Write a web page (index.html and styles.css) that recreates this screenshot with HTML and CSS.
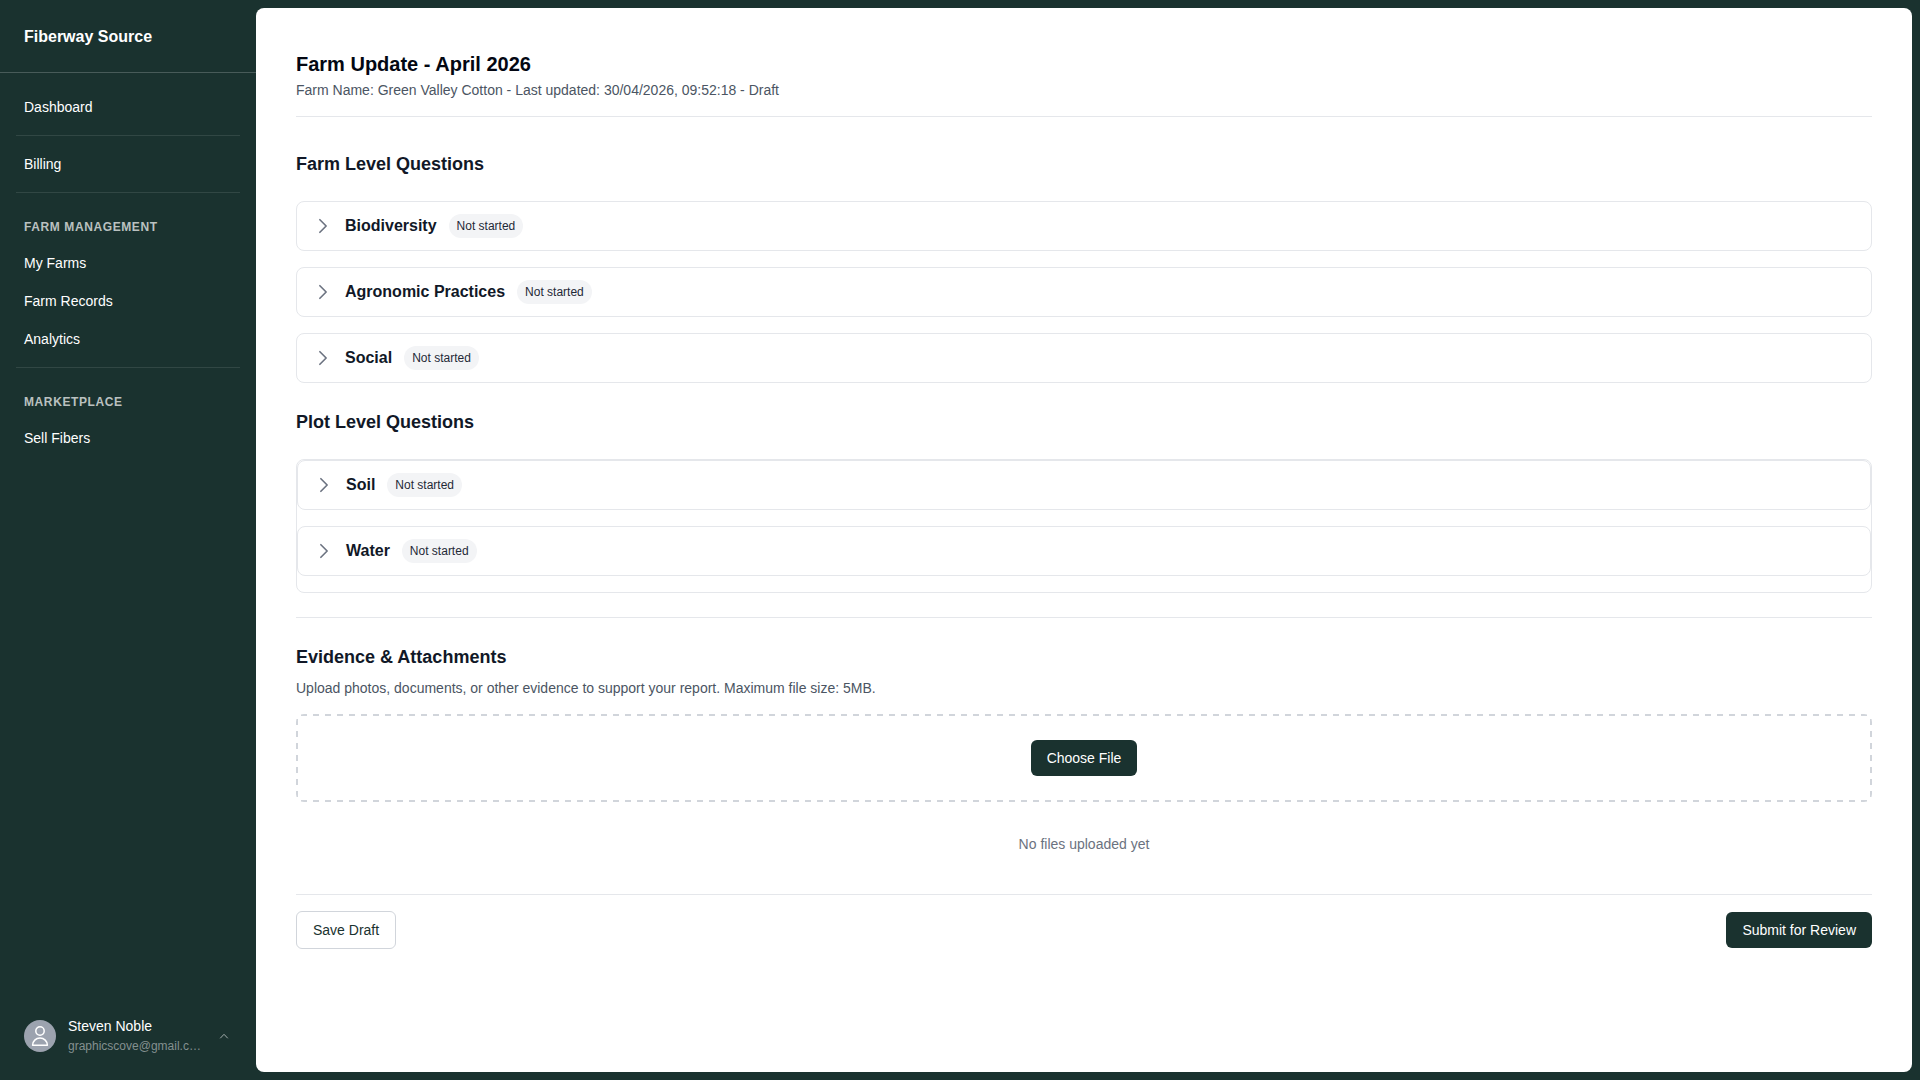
FILE: index.html
```html
<!DOCTYPE html>
<html lang="en">
<head>
  <meta charset="UTF-8" />
  <meta name="viewport" content="width=device-width, initial-scale=1.0"/>
  <title>Farm Update - Fiberway Source</title>
  <link rel="stylesheet" href="styles.css">
</head>
<body>
  <aside class="sidebar">
    <div class="brand">Fiberway Source</div>
    <nav class="nav">
      <a class="nav-link" href="#dashboard">Dashboard</a>
      <hr class="nav-divider">
      <a class="nav-link" href="#billing">Billing</a>
      <hr class="nav-divider">
      <div class="nav-group">
        <h2 class="nav-title">Farm Management</h2>
        <a class="nav-link" href="#farms">My Farms</a>
        <a class="nav-link" href="#records">Farm Records</a>
        <a class="nav-link" href="#analytics">Analytics</a>
      </div>
      <hr class="nav-divider">
      <div class="nav-group">
        <h2 class="nav-title">Marketplace</h2>
        <a class="nav-link" href="#sell">Sell Fibers</a>
      </div>
    </nav>
    <button type="button" class="user">
      <span class="avatar">
        <svg width="20" height="20" viewBox="0 0 20 20" fill="none" stroke="#fff" stroke-width="1.5" stroke-linejoin="round">
          <circle cx="10" cy="5" r="4.2"/>
          <path d="M2.6 19.2a7.4 7.2 0 0 1 14.8 0z"/>
        </svg>
      </span>
      <span class="user-info">
        <span class="user-name">Steven Noble</span>
        <span class="user-email">graphicscove@gmail.com</span>
      </span>
      <svg class="user-arrow" width="16" height="16" viewBox="0 0 16 16" fill="none" stroke="currentColor" stroke-linecap="round" stroke-linejoin="round">
        <path d="M4.5 10 8 6.3l3.5 3.7"/>
      </svg>
    </button>
  </aside>

  <main class="panel">
    <header class="page-header">
      <h1>Farm Update - April 2026</h1>
      <p>Farm Name: Green Valley Cotton - Last updated: 30/04/2026, 09:52:18 - Draft</p>
    </header>

    <section class="questions">
      <h2>Farm Level Questions</h2>
      <div class="card-list">
        <button type="button" class="card">
          <svg class="chevron" viewBox="0 0 24 24"><path d="m8.25 4.5 7.5 7.5-7.5 7.5"/></svg>
          <span class="card-title">Biodiversity</span>
          <span class="status">Not started</span>
        </button>
        <button type="button" class="card">
          <svg class="chevron" viewBox="0 0 24 24"><path d="m8.25 4.5 7.5 7.5-7.5 7.5"/></svg>
          <span class="card-title">Agronomic Practices</span>
          <span class="status">Not started</span>
        </button>
        <button type="button" class="card">
          <svg class="chevron" viewBox="0 0 24 24"><path d="m8.25 4.5 7.5 7.5-7.5 7.5"/></svg>
          <span class="card-title">Social</span>
          <span class="status">Not started</span>
        </button>
      </div>
    </section>

    <section class="questions">
      <h2>Plot Level Questions</h2>
      <div class="card-list boxed">
        <button type="button" class="card">
          <svg class="chevron" viewBox="0 0 24 24"><path d="m8.25 4.5 7.5 7.5-7.5 7.5"/></svg>
          <span class="card-title">Soil</span>
          <span class="status">Not started</span>
        </button>
        <button type="button" class="card">
          <svg class="chevron" viewBox="0 0 24 24"><path d="m8.25 4.5 7.5 7.5-7.5 7.5"/></svg>
          <span class="card-title">Water</span>
          <span class="status">Not started</span>
        </button>
      </div>
    </section>

    <section class="evidence">
      <h2>Evidence &amp; Attachments</h2>
      <p class="hint">Upload photos, documents, or other evidence to support your report. Maximum file size: 5MB.</p>
      <div class="dropzone">
        <button type="button" class="btn btn-primary">Choose File</button>
      </div>
      <p class="empty">No files uploaded yet</p>
    </section>

    <footer class="actions">
      <button type="button" class="btn btn-outline">Save Draft</button>
      <button type="submit" class="btn btn-primary">Submit for Review</button>
    </footer>
  </main>
</body>
</html>
```
FILE: styles.css
```css
* { box-sizing: border-box; }
body { display: flex; min-height: 100vh; margin: 0; background: #1a322f; color: #111827; font-family: "Liberation Sans", Arial, sans-serif; font-size: 14px; line-height: 20px; }
h1, h2, p { margin: 0; }
button { font: inherit; color: inherit; cursor: pointer; }

/* Sidebar */
.sidebar { display: flex; flex-direction: column; flex: none; width: 256px; color: #fff; }
.brand { padding: 25px 24px 23px; border-bottom: 1px solid #485b59; font-size: 16px; font-weight: bold; line-height: 24px; }
.nav { flex: 1; padding: 16px; }
.nav-group { display: flex; flex-direction: column; gap: 2px; }
.nav-link { display: block; padding: 8px; color: #fff; text-decoration: none; }
.nav-divider { margin: 10px 0; border: 0; border-top: 1px solid #314744; }
.nav-title { padding: 16px 8px 8px; color: #bac1c0; font-size: 12px; line-height: 16px; letter-spacing: 0.05em; text-transform: uppercase; }
.user { display: flex; align-items: center; gap: 12px; margin: 16px; padding: 8px; border: 0; background: none; text-align: left; }
.avatar { display: flex; flex: none; align-items: center; justify-content: center; width: 32px; height: 32px; border-radius: 50%; background: #9ca3af; }
.user-info { flex: 1; min-width: 0; }
.user-name { display: block; }
.user-email { display: block; overflow: hidden; color: #84908f; font-size: 12px; text-overflow: ellipsis; white-space: nowrap; }
.user-arrow { flex: none; color: #a3adac; }

/* Content panel */
.panel { flex: 1; min-width: 0; margin: 8px 8px 8px 0; padding: 40px; border-radius: 8px; background: #fff; }
.page-header { padding-bottom: 16px; border-bottom: 1px solid #e5e7eb; margin-bottom: 32px; color: #4b5563; }
h1 { color: #030712; font-size: 20px; line-height: 32px; }
.panel h2 { font-size: 18px; line-height: 30px; }

.questions { margin-bottom: 24px; }
.card-list { display: flex; flex-direction: column; gap: 16px; margin-top: 22px; }
.boxed { padding-bottom: 16px; border: 1px solid #e5e7eb; border-radius: 8px; }
.card { display: flex; align-items: center; gap: 12px; width: 100%; padding: 12px 16px; border: 1px solid #e5e7eb; border-radius: 8px; background: #fff; text-align: left; }
.card-title { font-size: 16px; font-weight: bold; line-height: 24px; }
.chevron { width: 20px; height: 20px; fill: none; stroke: #6b7280; stroke-width: 2; stroke-linecap: round; stroke-linejoin: round; }
.status { padding: 4px 8px; border-radius: 12px; background: #f3f4f6; color: #1f2937; font-size: 12px; line-height: 16px; }

.evidence { padding-top: 24px; border-top: 1px solid #e5e7eb; }
.hint { margin: 6px 0 16px; color: #4b5563; }

/* dashed outline, 6px dash and 6px gap on each side */
.dropzone {
  --dash: #d1d5db 0 6px, transparent 6px 12px;
  display: flex;
  justify-content: center;
  padding: 26px;
  border-radius: 8px;
  background:
    repeating-linear-gradient(90deg, var(--dash)) center top / calc(100% - 10px) 2px no-repeat,
    repeating-linear-gradient(90deg, var(--dash)) center bottom / calc(100% - 10px) 2px no-repeat,
    repeating-linear-gradient(180deg, var(--dash)) left center / 2px calc(100% - 10px) no-repeat,
    repeating-linear-gradient(180deg, var(--dash)) right center / 2px calc(100% - 10px) no-repeat;
}
.empty { padding: 32px 0 40px; color: #6b7280; text-align: center; }

.btn { padding: 8px 16px; border: 0; border-radius: 6px; }
.btn-primary { background: #1a322f; color: #fff; }
.btn-outline { border: 1px solid #d1d5db; background: #fff; color: #1a322f; }
.actions { display: flex; align-items: center; justify-content: space-between; padding-top: 16px; border-top: 1px solid #e5e7eb; }
```
